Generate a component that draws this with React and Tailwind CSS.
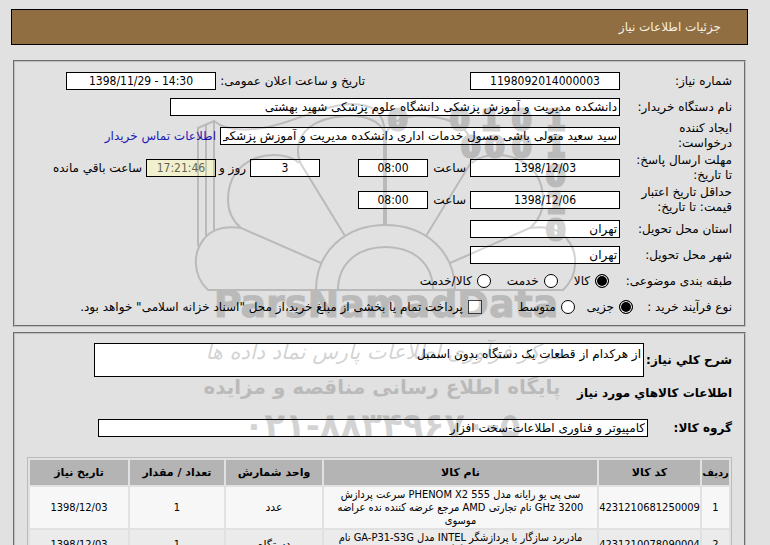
import React, { useState } from 'react';

const persian = "font-['DejaVu_Sans',sans-serif]";
const numeric = "font-['DejaVu_Sans_Condensed','DejaVu_Sans',sans-serif]";

const items = [
    {
        id: 1,
        code: '4231210681250009',
        name: ['سی پی یو رایانه مدل PHENOM X2 555 سرعت پردازش', '3200 GHz نام تجارتی AMD مرجع عرضه کننده نده عراضه', 'موسوی'],
        unit: 'عدد',
        count: 1,
        date: '1398/12/03'
    },
    {
        id: 2,
        code: '4231210078090004',
        name: ['مادربرد سازگار با پردازشگر INTEL مدل GA-P31-S3G نام', 'تجارتی گیگابایت'],
        unit: 'دستگاه',
        count: 1,
        date: '1398/12/03'
    }
];

const Field = ({ id, label, tall, children }) => (
    <div className={tall ? 'flex items-center gap-1 h-8' : 'flex items-center gap-1 h-[26px]'}>
        <label htmlFor={id} className="w-[108px] shrink-0 whitespace-pre leading-[15px]">{label}</label>
        {children}
    </div>
);

const TextBox = ({ className, ...props }) => (
    <input
        type="text"
        readOnly
        className={`h-[18px] shrink-0 border border-black bg-white px-0.5 leading-4 ${persian} ${className}`}
        {...props}
    />
);

const NumberBox = ({ className, ...props }) => (
    <input
        type="text"
        dir="ltr"
        readOnly
        className={`h-[18px] shrink-0 border border-black px-0.5 text-center leading-4 ${numeric} ${className}`}
        {...props}
    />
);

const Radio = ({ name, value, current, onChange, children }) => (
    <label className="flex items-center gap-[5px] whitespace-nowrap">
        <input
            type="radio"
            name={name}
            checked={current === value}
            onChange={() => onChange(value)}
            className="size-3.5 appearance-none rounded-full border border-black bg-white checked:bg-black checked:shadow-[inset_0_0_0_1px_white]"
        />
        {children}
    </label>
);

const WatermarkPetals = () => (
    <g>
        <path d="M385 134 C380 119 362 115 345 116 C314 118 298 132 298 150 Q298 158 301 164 L345 236" />
        <path d="M299 163 C290 154 270 153 256 158 C236 166 228 182 228 200 C228 213 234 222 241 228 L321 263" />
        <path d="M241 228 C226 226 212 229 204 239 C193 252 192 275 208 290 H386" />
        <path d="M316 290 C316 252 345 225 386 225" />
        <path d="M338 290 C338 264 357 247 386 247" />
    </g>
);

const Watermark = () => (
    <svg width="770" height="460" viewBox="0 0 770 460" aria-hidden="true" className="pointer-events-none absolute left-0 top-0 opacity-[0.17]">
        <g fill="none" stroke="black" strokeWidth="2">
            <WatermarkPetals />
            <g transform="translate(771 0) scale(-1 1)">
                <WatermarkPetals />
            </g>
            <path d="M385 134 V225" strokeWidth="4" />
            <path d="M198 246 V128 L214 121 V230 M206 236 V125" />
            <path d="M214 121 C226 131 246 131 268 127 C300 120 320 106 350 104 C374 104 384 112 385 134" />
        </g>
        <g className="font-['DejaVu_Sans',sans-serif] font-bold" fill="black" stroke="black">
            <text direction="ltr" fontSize="28" strokeWidth="3" x="388 450 481 512 546" y="130">00101</text>
            <text direction="ltr" fontSize="28" strokeWidth="3" x="461 485 512 546" y="157">0001</text>
            <text direction="ltr" fontSize="28" strokeWidth="3" x="546 546 546" y="186 213 240">010</text>
            <text direction="ltr" fontSize="38" x="386" y="317" textAnchor="middle">ParsNamadData</text>
        </g>
        <g className="font-['DejaVu_Sans',sans-serif]" fill="black">
            <text direction="rtl" fontSize="21" fontStyle="italic" x="384" y="359" textAnchor="middle">مرکز فرآوری اطلاعات پارس نماد داده ها</text>
            <text direction="rtl" fontSize="20" fontWeight="bold" x="382" y="394" textAnchor="middle">پایگاه اطلاع رسانی مناقصه و مزایده</text>
            <text direction="ltr" fontSize="34" fontWeight="bold" x="382" y="437" textAnchor="middle">{'\u202d۰۲۱-۸۸۳۴۹۶۷۰-۵\u202c'}</text>
        </g>
    </svg>
);

const panel = 'ml-[13px] mr-6 border-2 [border-style:groove] border-[#c0c0c0] pr-3 pl-3';

export default function App() {
    const [category, setCategory] = useState('goods');
    const [process, setProcess] = useState('minor');
    const [treasury, setTreasury] = useState(false);

    return (
        <div dir="rtl" className={`relative overflow-hidden bg-[#e1e1e1] pt-[9px] pb-6 text-[12px] text-black ${persian}`}>
            {/* Header */}
            <header className="ml-[11px] mr-[22px] flex h-9 items-center border border-black bg-[#906e41] pr-[26px]">
                <h1 className="text-[#f8efe0]">جزئیات اطلاعات نیاز</h1>
            </header>

            {/* Request info */}
            <section className={`mt-[15px] pt-1.5 pb-[5px] ${panel}`}>
                <Field id="number" label="شماره نیاز:">
                    <NumberBox id="number" className="w-[150px] bg-white" defaultValue="1198092014000003" />
                    <label htmlFor="announce" className="mr-[101px] w-[145px] whitespace-nowrap">تاریخ و ساعت اعلان عمومی:</label>
                    <NumberBox id="announce" className="w-[150px] bg-white" defaultValue="1398/11/29 - 14:30" />
                </Field>
                <Field id="buyer" label="نام دستگاه خریدار:">
                    <TextBox id="buyer" className="w-[450px]" defaultValue="دانشکده مدیریت و آموزش پزشکی دانشگاه علوم پزشکی شهید بهشتی" />
                </Field>
                <Field id="creator" label={'ایجاد کننده\nدرخواست:'} tall>
                    <TextBox id="creator" className="w-[400px]" defaultValue="سید سعید متولی باشی مسول خدمات اداری دانشکده مدیریت و آموزش پزشکی" />
                    <a href="#contact" className="whitespace-nowrap text-[#1a1ab8]">اطلاعات تماس خریدار</a>
                </Field>
                <Field id="deadline" label={'مهلت ارسال پاسخ:\nتا تاریخ:'} tall>
                    <NumberBox id="deadline" className="w-[150px] bg-white" defaultValue="1398/12/03" />
                    <label htmlFor="deadline-time" className="w-[34px]">ساعت</label>
                    <NumberBox id="deadline-time" className="w-[70px] bg-white" defaultValue="08:00" />
                    <NumberBox id="days" aria-label="روز" className="mr-[34px] w-[70px] bg-white" defaultValue="3" />
                    <label htmlFor="days" className="w-[26px] whitespace-nowrap">روز و</label>
                    <NumberBox id="remaining" className="w-[70px] bg-[#f2f1cf] text-[#66644f]" defaultValue="17:21:46" />
                    <label htmlFor="remaining" className="whitespace-nowrap">ساعت باقي مانده</label>
                </Field>
                <Field id="validity" label={'حداقل تاریخ اعتبار\nقیمت: تا تاریخ:'} tall>
                    <NumberBox id="validity" className="w-[150px] bg-white" defaultValue="1398/12/06" />
                    <label htmlFor="validity-time" className="w-[34px]">ساعت</label>
                    <NumberBox id="validity-time" className="w-[70px] bg-white" defaultValue="08:00" />
                </Field>
                <Field id="province" label="استان محل تحویل:">
                    <TextBox id="province" className="w-[150px]" defaultValue="تهران" />
                </Field>
                <Field id="city" label="شهر محل تحویل:">
                    <TextBox id="city" className="w-[150px]" defaultValue="تهران" />
                </Field>
                <div role="radiogroup" aria-labelledby="category" className="flex h-[26px] items-center gap-6">
                    <span id="category" className="w-[99px] whitespace-nowrap">طبقه بندی موضوعی:</span>
                    <div className="flex gap-4">
                        <Radio name="category" value="goods" current={category} onChange={setCategory}>کالا</Radio>
                        <Radio name="category" value="service" current={category} onChange={setCategory}>خدمت</Radio>
                        <Radio name="category" value="both" current={category} onChange={setCategory}>کالا/خدمت</Radio>
                    </div>
                </div>
                <div className="flex h-[26px] items-center gap-3">
                    <span id="process" className="w-[87px] whitespace-nowrap">نوع فرآیند خرید :</span>
                    <div role="radiogroup" aria-labelledby="process" className="flex gap-3">
                        <Radio name="process" value="minor" current={process} onChange={setProcess}>جزیی</Radio>
                        <Radio name="process" value="medium" current={process} onChange={setProcess}>متوسط</Radio>
                    </div>
                    <label className="mr-6 flex items-center gap-[5px] whitespace-nowrap">
                        <input
                            type="checkbox"
                            checked={treasury}
                            onChange={() => setTreasury(!treasury)}
                            className="size-3.5 appearance-none border border-[#444444] bg-white checked:bg-black"
                        />
                        پرداخت تمام یا بخشی از مبلغ خرید،از محل "اسناد خزانه اسلامی" خواهد بود.
                    </label>
                </div>
            </section>

            {/* Goods */}
            <section className={`mt-[5px] pt-[9px] pb-3 ${panel}`}>
                <div className="flex items-center gap-1">
                    <label htmlFor="summary" className="w-[84px] shrink-0 whitespace-nowrap font-bold">شرح کلي نیاز:</label>
                    <textarea
                        id="summary"
                        readOnly
                        className="h-[34px] w-[550px] resize-none border border-black bg-white px-0.5 leading-5"
                        defaultValue="از هرکدام از قطعات یک دستگاه بدون اسمبل"
                    />
                </div>
                <h2 className="flex h-8 items-center font-bold">اطلاعات کالاهاي مورد نیاز</h2>
                <div className="flex h-[38px] items-center">
                    <label htmlFor="group" className="w-[84px] shrink-0 font-bold">گروه کالا:</label>
                    <TextBox id="group" className="w-[550px]" defaultValue="کامپیوتر و فناوری اطلاعات-سخت افزار" />
                </div>

                <table className="mt-2.5 w-full table-fixed border-separate border-spacing-[2px] border border-[#bbbbbb] text-center text-[11px] leading-[13px]">
                    <thead>
                        <tr className="h-[25px] bg-[#b4b4b4]">
                            <th className="w-[27px] text-[10px]">ردیف</th>
                            <th className="w-[101px]">کد کالا</th>
                            <th>نام کالا</th>
                            <th className="w-[96px]">واحد شمارش</th>
                            <th className="w-[94px]">تعداد / مقدار</th>
                            <th className="w-[98px]">تاریخ نیاز</th>
                        </tr>
                    </thead>
                    <tbody>
                        {items.map((item) => (
                            <tr key={item.id} className={item.id % 2 ? 'bg-[#f7f7f7]' : 'bg-[#ebebeb]'}>
                                <td className={numeric}>{item.id}</td>
                                <td className={numeric}>{item.code}</td>
                                <td className={`whitespace-pre py-px ${numeric}`}>{item.name.join('\n')}</td>
                                <td>{item.unit}</td>
                                <td className={numeric}>{item.count}</td>
                                <td className={numeric}>{item.date}</td>
                            </tr>
                        ))}
                    </tbody>
                </table>
            </section>

            <Watermark />
        </div>
    );
}
